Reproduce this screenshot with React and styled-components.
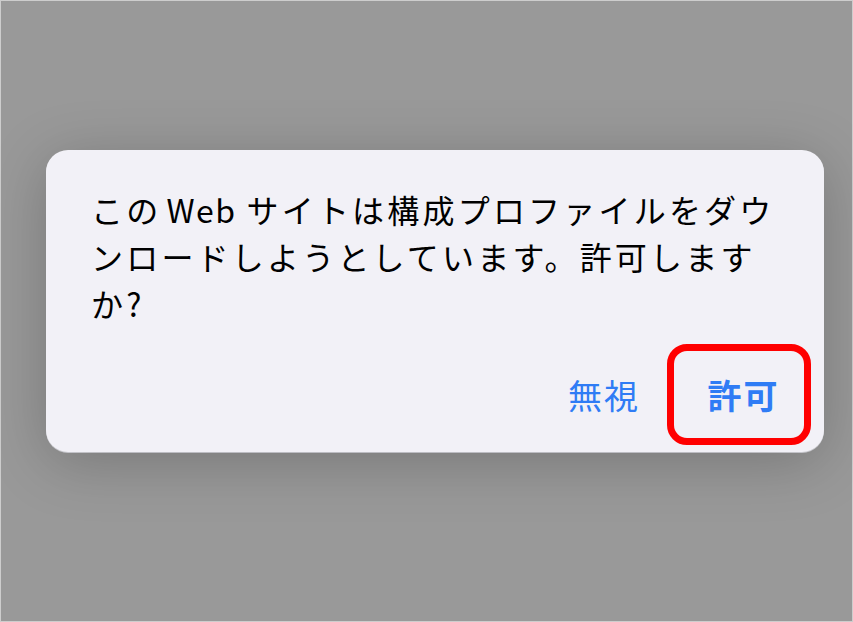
import React from "react";
import styled, { createGlobalStyle } from "styled-components";

const GlobalStyle = createGlobalStyle`
  html, body {
    margin: 0;
    padding: 0;
    background: #999999;
  }
  body {
    font-family: "Noto Sans CJK JP", "Noto Sans", sans-serif;
  }
  * { box-sizing: border-box; }
`;

const Backdrop = styled.div`
  width: 853px;
  height: 622px;
  border: 1px solid #cdcdcd;
  background: #999999;
  padding: 149px 0 0 45px;
`;

const Dialog = styled.div`
  width: 778px;
  background: #f2f1f7;
  border-radius: 22px;
  box-shadow: 0 10px 60px rgba(0, 0, 0, 0.22), 0 1px 0 #dcdce2;
  display: flex;
  flex-direction: column;
`;

const Message = styled.p`
  margin: 0;
  padding: 36px 0 0 45px;
  font-size: 32px;
  line-height: 47px;
  letter-spacing: 3.2px;
  color: #000000;
  white-space: nowrap;
`;

const Latin = styled.span`
  margin: 0 10px 0 5px;
  letter-spacing: 1.5px;
`;

const ButtonRow = styled.div`
  display: flex;
  justify-content: flex-end;
  align-items: center;
  gap: 27px;
  margin-top: 17px;
  padding: 0 13px 7px 0;
`;

const ActionButton = styled.button`
  font-family: "Noto Sans CJK JP", "Noto Sans", sans-serif;
  font-size: 34px;
  letter-spacing: 2px;
  font-weight: ${(p) => (p.$primary ? 700 : 400)};
  color: #2f7cf5;
  background: transparent;
  padding: 0 0 0 ${(p) => (p.$highlighted ? "9px" : "0")};
  cursor: pointer;
  display: flex;
  align-items: center;
  justify-content: center;
  border: ${(p) => (p.$highlighted ? "7px solid #ff0000" : "none")};
  border-radius: ${(p) => (p.$highlighted ? "20px" : "0")};
  width: ${(p) => (p.$highlighted ? "144px" : "auto")};
  height: 101px;
  line-height: 1;
`;

export default function App() {
  return (
    <>
      <GlobalStyle />
      <Backdrop>
        <Dialog>
          <Message>
            この<Latin>Web</Latin>サイトは構成プロファイルをダウ
            <br />
            ンロードしようとしています。許可します
            <br />
            か?
          </Message>
          <ButtonRow>
            <ActionButton>無視</ActionButton>
            <ActionButton $primary $highlighted>許可</ActionButton>
          </ButtonRow>
        </Dialog>
      </Backdrop>
    </>
  );
}
